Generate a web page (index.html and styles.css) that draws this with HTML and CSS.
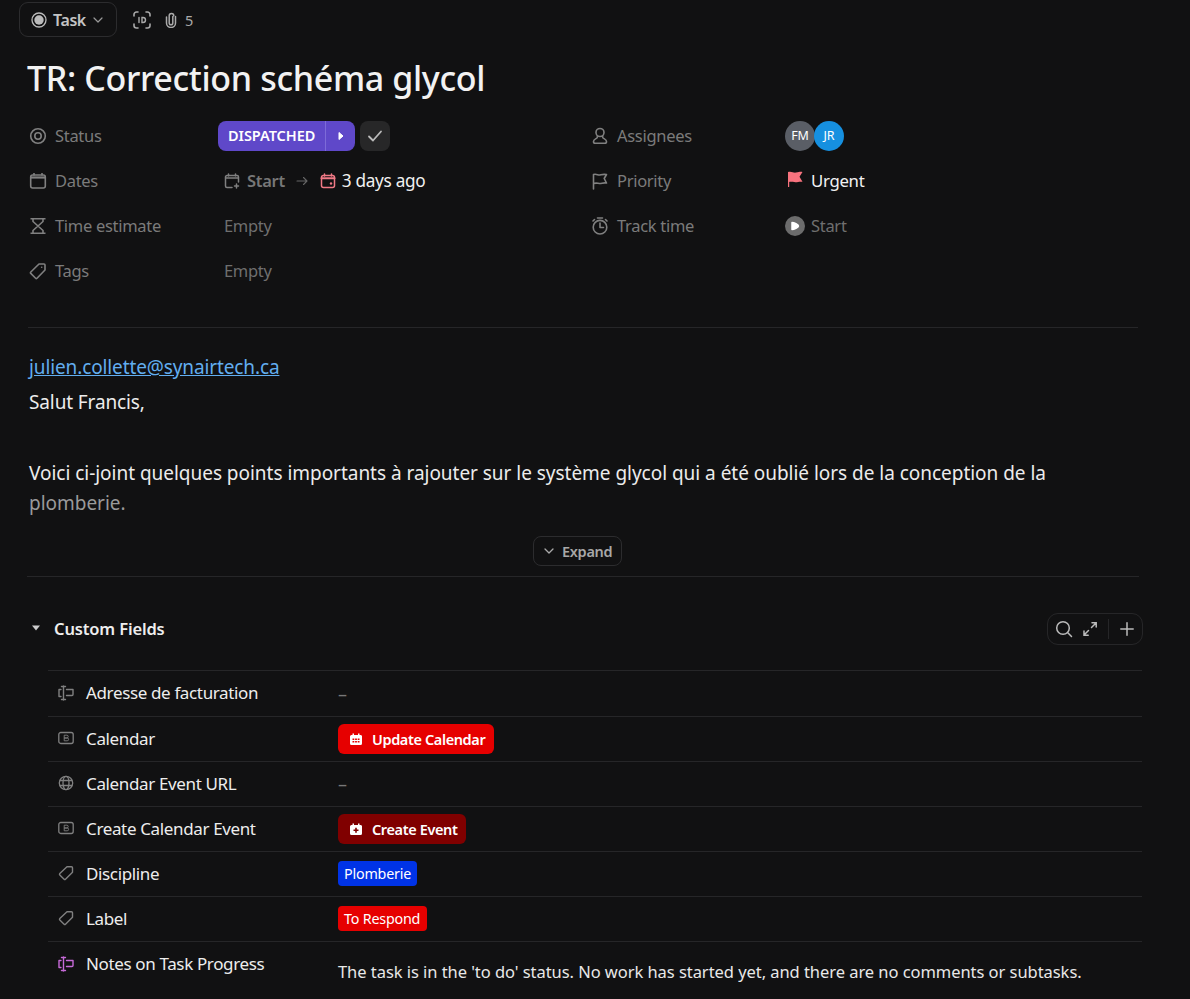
FILE: index.html
```html
<!DOCTYPE html>
<html lang="en">
<head>
<meta charset="utf-8">
<title>TR: Correction schéma glycol</title>
<link rel="stylesheet" href="styles.css">
</head>
<body>
<div class="topbar">
  <button class="type-btn">
    <svg class="ic16" viewBox="0 0 16 16"><circle cx="8" cy="8" r="7" fill="none" stroke="#bbb" stroke-width="1.300"/><circle cx="8" cy="8" r="4.700" fill="#bbb"/></svg>
    <span>Task</span>
    <svg class="ic12" viewBox="0 0 12 12"><path d="M2 4l4 4 4-4" fill="none" stroke="#999" stroke-width="1.200" stroke-linecap="round" stroke-linejoin="round"/></svg>
  </button>
  <svg class="ic18 id-ic" viewBox="0 0 18 18" fill="none" stroke="#aaa" stroke-width="1.600" stroke-linecap="round"><path d="M1 5V3.500A2.500 2.500 0 0 1 3.500 1H5M13 1h1.500A2.500 2.500 0 0 1 17 3.500V5M17 13v1.500a2.500 2.500 0 0 1-2.500 2.500H13M5 17H3.500A2.500 2.500 0 0 1 1 14.500V13"/><path d="M6 6.500v5M9 6.500v5h1a2.500 2.500 0 0 0 0-5z" stroke-width="1.400"/></svg>
  <svg class="ic16 clip-ic" viewBox="0 0 16 16" fill="none" stroke="#aaa" stroke-width="1.500" stroke-linecap="round"><path d="M9.800 4.500v6.500a1.800 1.800 0 0 1-3.600 0V3.800a2.300 2.300 0 0 1 4.600 0"/><path d="M3.500 5v6a4.500 4.500 0 0 0 9 0V4.500"/></svg>
  <span class="clip-count">5</span>
</div>

<h1 class="title">TR: Correction schéma glycol</h1>

<section class="props">
  <div class="prop">
    <div class="prop-label">
      <svg class="ic18" viewBox="0 0 18 18" fill="none" stroke="#808080" stroke-width="1.600"><circle cx="9" cy="9" r="7.300"/><circle cx="9" cy="9" r="3.200"/></svg>
      <span>Status</span>
    </div>
    <div class="prop-value status-value">
      <div class="status"><span class="status-name">DISPATCHED</span><span class="status-next"><svg viewBox="0 0 8 10" class="ic-next"><path d="M2 1.500l4 3.500-4 3.500z" fill="#fff" stroke="#fff" stroke-linejoin="round"/></svg></span></div>
      <div class="check"><svg viewBox="0 0 16 16" class="ic16"><path d="M2 8.500l4 4 8-9" fill="none" stroke="#bbb" stroke-width="1.800" stroke-linecap="round" stroke-linejoin="round"/></svg></div>
    </div>
  </div>
  <div class="prop">
    <div class="prop-label">
      <svg class="ic18" viewBox="0 0 18 18" fill="none" stroke="#808080" stroke-width="1.600"><rect x="1.700" y="3" width="14.600" height="13" rx="2"/><path d="M1.700 5.500h14.600" stroke-width="2.200"/><path d="M5 1v2.500M13 1v2.500"/></svg>
      <span class="narrow">Dates</span>
    </div>
    <div class="prop-value pad">
      <svg class="ic16" viewBox="0 0 16 16" fill="none" stroke="#808080" stroke-width="1.500" stroke-linecap="round"><path d="M8 14.500H3a1.500 1.500 0 0 1-1.500-1.500V4A1.500 1.500 0 0 1 3 2.500h10A1.500 1.500 0 0 1 14.500 4v5M1.500 5h13M4.500 1v2M11.500 1v2M12.500 11v4M10.500 13h4"/></svg>
      <span class="start-date">Start</span>
      <svg class="ic12 arrow" viewBox="0 0 12 12" fill="none" stroke="#666" stroke-width="1.100" stroke-linecap="round" stroke-linejoin="round"><path d="M1 6h10M7.500 2.500L11 6l-3.500 3.500"/></svg>
      <svg class="ic16 due-ic" viewBox="0 0 16 16" fill="none" stroke="#f17a86" stroke-width="1.500" stroke-linecap="round"><rect x="1.500" y="2.500" width="13" height="12" rx="2"/><path d="M1.500 5.300h13" stroke-width="2"/><path d="M4.500 1v2M11.500 1v2"/><circle cx="11" cy="10.500" r="1.200" fill="#f17a86" stroke="none"/></svg>
      <span class="due">3 days ago</span>
    </div>
  </div>
  <div class="prop">
    <div class="prop-label">
      <svg class="ic18" viewBox="0 0 18 18" fill="none" stroke="#808080" stroke-width="1.600" stroke-linejoin="round"><path d="M1.500 1.700h15M1.500 16.300h15M4 2v2.500L9 9l5-4.500V2M4 16v-2.500L9 9l5 4.500V16"/></svg>
      <span>Time estimate</span>
    </div>
    <div class="prop-value pad muted">Empty</div>
  </div>
  <div class="prop">
    <div class="prop-label">
      <svg class="ic18" viewBox="0 0 18 18" fill="none" stroke="#808080" stroke-width="1.600" stroke-linejoin="round"><path d="M10 2h5a1 1 0 0 1 1 1v5l-8 8.200a1 1 0 0 1-1.400 0L1.800 11.400a1 1 0 0 1 0-1.400z"/><circle cx="12.700" cy="5.300" r=".8" fill="#808080" stroke="none"/></svg>
      <span>Tags</span>
    </div>
    <div class="prop-value pad muted">Empty</div>
  </div>

  <div class="prop prop-r r1">
    <div class="prop-label">
      <svg class="ic18" viewBox="0 0 18 18" fill="none" stroke="#808080" stroke-width="1.600" stroke-linejoin="round"><circle cx="9" cy="5.500" r="4"/><path d="M6.500 9l-.3 1.600c-.2 1-3.700 1.500-3.700 3.900 0 1 .6 1.800 1.600 1.800h9.800c1 0 1.600-.8 1.600-1.800 0-2.400-3.500-2.900-3.700-3.900L11.500 9"/></svg>
      <span>Assignees</span>
    </div>
    <div class="prop-value avatars"><span class="avatar fm">FM</span><span class="avatar jr">JR</span></div>
  </div>
  <div class="prop prop-r r2">
    <div class="prop-label">
      <svg class="ic18" viewBox="0 0 18 18" fill="none" stroke="#808080" stroke-width="1.600" stroke-linecap="round" stroke-linejoin="round"><path d="M2.500 17V2.500c3-1 4.500 1 6.500.5s3-1 6.500-.5l-2.300 4 2.300 4.500c-3.500-.5-4.500.5-6.500.5s-3.500-1-6.500 0"/></svg>
      <span>Priority</span>
    </div>
    <div class="prop-value flagged">
      <svg class="ic16" viewBox="0 0 16 16"><path d="M1 1c4-.8 5 1 8 .6S13 .6 15.500 1l-3 4.800 3 5c-3-.5-4.500.4-7 .4S3.500 10.400 2.200 11v5H1z" fill="#f8737e"/></svg>
      <span class="urgent">Urgent</span>
    </div>
  </div>
  <div class="prop prop-r r3">
    <div class="prop-label">
      <svg class="ic18" viewBox="0 0 18 18" fill="none" stroke="#808080" stroke-width="1.600" stroke-linecap="round" stroke-linejoin="round"><circle cx="9" cy="10.200" r="6.800"/><path d="M9 6v4.500h3.500M6.500 1h5M2 4l1.500-1.500M16 4l-1.500-1.500"/></svg>
      <span>Track time</span>
    </div>
    <div class="prop-value flagged muted">
      <svg class="ic20" viewBox="0 0 20 20"><circle cx="10" cy="10" r="10" fill="#6c6c6c"/><path d="M7 6.500c2 0 6.500 2 6.500 3.500S9 13.500 7 13.500z" fill="#fff" stroke="#fff" stroke-width="1.500" stroke-linejoin="round"/></svg>
      <span>Start</span>
    </div>
  </div>
</section>

<hr class="rule rule-a">

<article class="desc">
  <p class="line"><a href="#">julien.collette@synairtech.ca</a></p>
  <p class="line">Salut Francis,</p>
  <p class="line">&nbsp;</p>
  <p class="para">Voici ci-joint quelques points importants à rajouter sur le système glycol qui a été oublié lors de la conception de la <span class="fade">plomberie.</span></p>
</article>

<div class="expand-wrap">
  <button class="expand">
    <svg class="ic12" viewBox="0 0 12 12"><path d="M2 4l4 4 4-4" fill="none" stroke="#aaa" stroke-width="1.300" stroke-linecap="round" stroke-linejoin="round"/></svg>
    Expand
  </button>
</div>
<hr class="rule rule-b">

<section class="cf">
  <header class="cf-head">
    <svg class="caret" viewBox="0 0 10 6"><path d="M1 .5h8L5 5.500z" fill="#ccc"/></svg>
    <h2>Custom Fields</h2>
    <div class="cf-tools">
      <svg class="ic18" viewBox="0 0 18 18" fill="none" stroke="#bbb" stroke-width="1.500" stroke-linecap="round"><circle cx="8" cy="8" r="6.300"/><path d="M12.800 12.800L16.500 16.500"/></svg>
      <svg class="ic16" viewBox="0 0 16 16" fill="none" stroke="#bbb" stroke-width="1.500" stroke-linecap="round"><path d="M9.500 6.500L14 2M10 1.800h4.200V6M6.500 9.500L2 14M2 10v4.200h4.200"/></svg>
      <span class="tool-sep"></span>
      <svg class="ic14" viewBox="0 0 14 14" fill="none" stroke="#bbb" stroke-width="1.500" stroke-linecap="round"><path d="M7 .8v12.400M.8 7h12.400"/></svg>
    </div>
  </header>
  <div class="cf-table">
    <div class="cf-row cf-first">
      <div class="cf-name"><svg class="fld" viewBox="0 0 16 16" fill="none" stroke="#808080" stroke-width="1.400" stroke-linecap="round" stroke-linejoin="round"><path d="M5.500 1v14M3.500 1.500h4M3.500 14.500h4M3 4.500H1v7h2M8.500 4.500H15v5a1 1 0 0 1-1 1H8.500"/></svg><span>Adresse de facturation</span></div>
      <div class="cf-val dash">–</div>
    </div>
    <div class="cf-row">
      <div class="cf-name"><svg class="fld" viewBox="0 0 16 16" fill="none" stroke="#808080" stroke-width="1.300"><rect x=".8" y="2.500" width="14.400" height="11" rx="2"/><path d="M6.200 5.200h2.600a1.300 1.300 0 0 1 0 2.800H6.200zM6.200 8h3a1.300 1.300 0 0 1 0 2.800h-3z" stroke-width=".9"/></svg><span>Calendar</span></div>
      <div class="cf-val"><span class="btn red"><svg class="ic12" viewBox="0 0 12 12"><path fill-rule="evenodd" d="M2.500 2V.5h1.500V2h4V.5h1.500V2h.5A1.500 1.500 0 0 1 12 3.500v7A1.500 1.500 0 0 1 10.500 12h-9A1.500 1.500 0 0 1 0 10.500v-7A1.500 1.500 0 0 1 1.500 2zM2.500 5.500v1.500h1.800V5.500zM5.100 5.500v1.500h1.800V5.500zM7.700 5.500v1.500h1.800V5.500zM2.500 8v1.500h1.800V8zM5.100 8v1.500h1.800V8zM7.700 8v1.500h1.800V8z" fill="#fff"/></svg>Update Calendar</span></div>
    </div>
    <div class="cf-row">
      <div class="cf-name"><svg class="fld" viewBox="0 0 16 16" fill="none" stroke="#808080" stroke-width="1.300"><circle cx="8" cy="8" r="6.700"/><ellipse cx="8" cy="8" rx="3" ry="6.700"/><path d="M1.800 5.500h12.400M1.800 10.500h12.400"/></svg><span>Calendar Event URL</span></div>
      <div class="cf-val dash">–</div>
    </div>
    <div class="cf-row">
      <div class="cf-name"><svg class="fld" viewBox="0 0 16 16" fill="none" stroke="#808080" stroke-width="1.300"><rect x=".8" y="2.500" width="14.400" height="11" rx="2"/><path d="M6.200 5.200h2.600a1.300 1.300 0 0 1 0 2.800H6.200zM6.200 8h3a1.300 1.300 0 0 1 0 2.800h-3z" stroke-width=".9"/></svg><span>Create Calendar Event</span></div>
      <div class="cf-val"><span class="btn dark"><svg class="ic12" viewBox="0 0 12 12"><path fill-rule="evenodd" d="M2.500 2V.5h1.500V2h4V.5h1.500V2h.5A1.500 1.500 0 0 1 12 3.500v7A1.500 1.500 0 0 1 10.500 12h-9A1.500 1.500 0 0 1 0 10.500v-7A1.500 1.500 0 0 1 1.500 2zM5.200 4.800v1.700H3.500v1.500h1.700v1.700h1.600V8h1.700V6.500H6.800V4.800z" fill="#fff"/></svg>Create Event</span></div>
    </div>
    <div class="cf-row">
      <div class="cf-name"><svg class="fld" viewBox="0 0 16 16" fill="none" stroke="#808080" stroke-width="1.400" stroke-linejoin="round"><path d="M9 1.800h4.500a1 1 0 0 1 1 1V7.200l-7 7a1 1 0 0 1-1.400 0L1.800 10a1 1 0 0 1 0-1.400z"/></svg><span>Discipline</span></div>
      <div class="cf-val"><span class="tag blue">Plomberie</span></div>
    </div>
    <div class="cf-row">
      <div class="cf-name"><svg class="fld" viewBox="0 0 16 16" fill="none" stroke="#808080" stroke-width="1.400" stroke-linejoin="round"><path d="M9 1.800h4.500a1 1 0 0 1 1 1V7.200l-7 7a1 1 0 0 1-1.400 0L1.800 10a1 1 0 0 1 0-1.400z"/></svg><span>Label</span></div>
      <div class="cf-val"><span class="tag redtag">To Respond</span></div>
    </div>
    <div class="cf-row cf-notes">
      <div class="cf-name"><svg class="fld" viewBox="0 0 16 16" fill="none" stroke="#c76ad8" stroke-width="1.400" stroke-linecap="round" stroke-linejoin="round"><path d="M5.500 1v14M3.500 1.500h4M3.500 14.500h4M3 4.500H1v7h2M8.500 4.500H15v5a1 1 0 0 1-1 1H8.500"/></svg><span>Notes on Task Progress</span></div>
      <div class="cf-val notes">The task is in the 'to do' status. No work has started yet, and there are no comments or subtasks.</div>
    </div>
  </div>
</section>
</body>
</html>
```
FILE: styles.css
```css
* { box-sizing: border-box; }
html, body { margin: 0; padding: 0; }
body {
  width: 1190px;
  height: 999px;
  overflow: hidden;
  background: #111112;
  color: #e8e8e8;
  font-family: "Noto Sans", "Open Sans", sans-serif;
  font-size: 16px;
}
svg { display: block; flex: none; }
.ic12 { width: 12px; height: 12px; }
.ic14 { width: 14px; height: 14px; }
.ic16 { width: 16px; height: 16px; }
.ic18 { width: 18px; height: 18px; }
.ic20 { width: 20px; height: 20px; }

.topbar {
  display: flex;
  align-items: center;
  height: 35px;
  margin: 2px 0 0 19px;
}
.type-btn {
  display: flex;
  align-items: center;
  gap: 6px;
  width: 98px;
  height: 35px;
  padding: 0 0 0 11px;
  background: none;
  border: 1px solid #2c2c2e;
  border-radius: 9px;
  color: #c4c4c4;
  font: 600 16px "Noto Sans", sans-serif;
  letter-spacing: -.4px;
}
.id-ic { margin-left: 16px; }
.clip-ic { margin-left: 12px; }
.clip-count { margin-left: 6px; color: #aaa; font-size: 14.500px; }

.title {
  margin: 16px 0 0 27px;
  height: 50px;
  font-size: 34px;
  line-height: 50px;
  font-weight: 500;
  letter-spacing: -.35px;
  color: #f2f2f2;
}

.props {
  display: grid;
  grid-template-columns: 562px 1fr;
  grid-auto-flow: column;
  grid-template-rows: repeat(4, 45px);
  margin: 10px 0 0 29px;
}
.prop { display: flex; align-items: center; height: 45px; }
.prop-label {
  width: 189px;
  display: flex;
  align-items: center;
  gap: 8px;
  color: #7b7b7b;
  font-size: 16.500px;
  letter-spacing: -.3px;
}
.prop-r .prop-label { width: 194px; }
.prop-value { display: flex; align-items: center; color: #e8e8e8; font-size: 16.500px; letter-spacing: -.3px; }
.pad { padding-left: 6px; }
.prop-value.muted { color: #6f6f6f; }
.r1 { grid-column: 2; grid-row: 1; }
.r2 { grid-column: 2; grid-row: 2; }
.r3 { grid-column: 2; grid-row: 3; }

.status-value { gap: 5px; }
.status {
  display: flex;
  align-items: stretch;
  width: 137px;
  height: 30px;
  background: #5f48c9;
  border-radius: 8px;
  color: #fff;
  font-size: 14.500px;
  font-weight: 600;
  letter-spacing: -.05px;
}
.status-name { width: 108px; padding-left: 10px; line-height: 29px; border-right: 1px solid #7d6bd8; white-space: nowrap; }
.status-next { flex: 1; display: flex; align-items: center; justify-content: center; }
.ic-next { width: 8px; height: 10px; }
.check {
  width: 30px;
  height: 30px;
  background: #272728;
  border-radius: 8px;
  display: flex;
  align-items: center;
  justify-content: center;
}
.start-date { margin-left: 7px; color: #777; font-weight: 600; }
.arrow { margin-left: 11px; }
.due-ic { margin-left: 12px; }
.due { margin-left: 6px; color: #f0f0f0; font-size: 17.200px; }

.avatar {
  display: block;
  width: 30px;
  height: 30px;
  border-radius: 50%;
  text-align: center;
  line-height: 30px;
  font-size: 12.500px;
  letter-spacing: -.2px;
  color: #fff;
}
.avatar.fm { background: #5a5e66; }
.avatar.jr { background: #1690e0; margin-left: -1px; }
.flagged { gap: 6px; }
.urgent { color: #f2f2f2; font-size: 16.800px; margin-left: 2px; }
.flagged .ic16 { margin-left: 2px; margin-top: -3px; }

.rule { border: 0; height: 1px; margin: 0; background: #262628; }
.rule-a { margin: 34px 52px 0 28px; }
.rule-b { margin: 10px 51px 0 27px; }

.desc { margin: 22px 52px 0 29px; color: #ececec; font-size: 19px; letter-spacing: -.12px; }
.line { margin: 0; height: 35px; line-height: 35px; }
.para { margin: 0; line-height: 30px; padding-top: 3px; letter-spacing: -.03px; }
.fade { color: #9a9a9a; }
.desc a { color: #62aef0; text-decoration: underline; }

.expand-wrap { display: flex; justify-content: center; margin: 18px 0 0 -35px; }
.expand {
  display: flex;
  align-items: center;
  gap: 7px;
  height: 30px;
  width: 89px;
  padding: 0 0 0 9px;
  background: none;
  border: 1px solid #2c2c2e;
  border-radius: 8px;
  color: #a8a8a8;
  font: 600 14.500px "Noto Sans", sans-serif;
  letter-spacing: -.3px;
}

.cf-head {
  display: flex;
  align-items: center;
  height: 34px;
  margin: 34px 47px 0 31px;
}
.caret { width: 10px; height: 6px; }
.cf-head h2 { margin: 0 0 0 13px; font-size: 16.500px; font-weight: 600; letter-spacing: -.15px; color: #eee; flex: 1; }
.cf-tools {
  display: flex;
  align-items: center;
  width: 96px;
  height: 32px;
  margin-top: 2px;
  padding-left: 7px;
  border: 1px solid #262628;
  border-radius: 11px;
}
.cf-tools .ic16 { margin-left: 9px; }
.tool-sep { width: 1px; height: 20px; background: #262628; margin: 0 11px 0 10px; }

.cf-table { margin: 25px 48px 0 48px; border-top: 1px solid #262628; }
.cf-row {
  display: flex;
  align-items: center;
  height: 45px;
  border-bottom: 1px solid #262628;
}
.cf-first { height: 46px; }
.cf-notes { border-bottom: 0; align-items: flex-start; height: 58px; }
.cf-name {
  width: 290px;
  display: flex;
  align-items: center;
  gap: 12px;
  padding-left: 10px;
  padding-bottom: 2px;
  color: #ededed;
  font-size: 17px;
  letter-spacing: -.36px;
}
.cf-notes .cf-name { padding-top: 10px; padding-bottom: 0; }
.fld { width: 16px; height: 16px; }
.cf-val { font-size: 15px; letter-spacing: -.2px; color: #e8e8e8; }
.cf-val.dash { color: #777; font-size: 18px; }
.btn {
  display: flex;
  align-items: center;
  gap: 10px;
  height: 30px;
  padding: 0 9px 0 12px;
  border-radius: 6px;
  color: #fff;
  font-size: 14.500px;
  font-weight: 600;
  letter-spacing: -.38px;
  width: max-content;
}
.red { background: #e60000; }
.dark { background: #800000; }
.tag {
  display: block;
  height: 25px;
  line-height: 25px;
  margin-top: -1px;
  padding: 0 6px;
  border-radius: 4px;
  color: #fff;
  font-size: 14.300px;
  letter-spacing: -.2px;
  width: max-content;
}
.blue { background: #0033e6; }
.redtag { background: #e60000; padding-right: 7px; }
.notes { padding-top: 18px; font-size: 16.500px; letter-spacing: -.05px; }
```
